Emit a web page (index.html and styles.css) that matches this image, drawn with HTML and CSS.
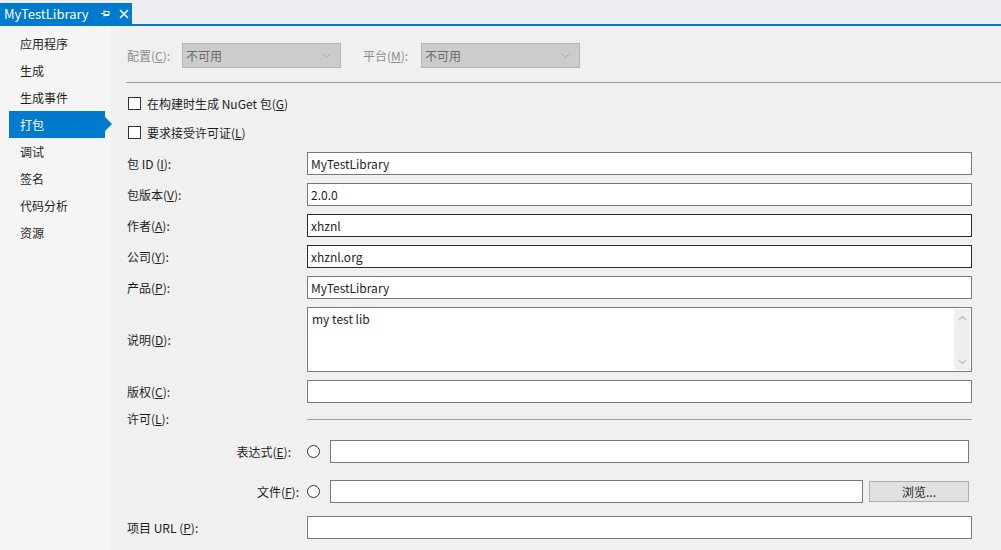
FILE: index.html
```html
<!DOCTYPE html>
<html lang="zh-CN">
<head>
<meta charset="utf-8">
<title>MyTestLibrary</title>
<link rel="stylesheet" href="styles.css">
</head>
<body>
<div class="header">
  <div class="tab">
    <span class="tab-title">MyTestLibrary</span>
    <svg class="pin" width="9" height="7" viewBox="0 0 9 7"><path d="M0 3.5H3M3 0.5V6.5M3 1.5H8V5.5H3M3 4.5H8" fill="none" stroke="#fff" stroke-width="1"/></svg>
    <svg class="close" width="10" height="10" viewBox="0 0 10 10"><path d="M1 1L9 9M9 1L1 9" stroke="#fff" stroke-width="1.6"/></svg>
  </div>
</div>
<div class="body">
  <nav class="sidebar">
    <div class="nav-item">应用程序</div>
    <div class="nav-item">生成</div>
    <div class="nav-item">生成事件</div>
    <div class="nav-item active">打包</div>
    <div class="nav-item">调试</div>
    <div class="nav-item">签名</div>
    <div class="nav-item">代码分析</div>
    <div class="nav-item">资源</div>
  </nav>
  <main class="main">
    <div class="config-row">
      <span class="dim-label">配置(<u>C</u>):</span>
      <div class="select"><span>不可用</span><svg width="9" height="5" viewBox="0 0 9 5"><path d="M0.5 0.5L4.5 4.5L8.5 0.5" fill="none" stroke="#a8a8a8"/></svg></div>
      <span class="dim-label plat">平台(<u>M</u>):</span>
      <div class="select"><span>不可用</span><svg width="9" height="5" viewBox="0 0 9 5"><path d="M0.5 0.5L4.5 4.5L8.5 0.5" fill="none" stroke="#a8a8a8"/></svg></div>
    </div>
    <div class="sep"></div>
    <label class="check-row"><span class="checkbox"></span>在构建时生成 NuGet 包(<u>G</u>)</label>
    <label class="check-row"><span class="checkbox"></span>要求接受许可证(<u>L</u>)</label>
    <div class="form">
      <div class="label">包 ID (<u>I</u>):</div>
      <div class="input">MyTestLibrary</div>
      <div class="label">包版本(<u>V</u>):</div>
      <div class="input">2.0.0</div>
      <div class="label">作者(<u>A</u>):</div>
      <div class="input dark">xhznl</div>
      <div class="label">公司(<u>Y</u>):</div>
      <div class="input dark">xhznl.org</div>
      <div class="label">产品(<u>P</u>):</div>
      <div class="input">MyTestLibrary</div>
      <div class="label">说明(<u>D</u>):</div>
      <div class="textarea">
        <div class="ta-text">my test lib</div>
        <div class="scroll">
          <svg width="9" height="6" viewBox="0 0 9 6"><path d="M1 5L4.5 1.5L8 5" fill="none" stroke="#c2c2c2" stroke-width="1.5"/></svg>
          <svg width="9" height="6" viewBox="0 0 9 6"><path d="M1 1L4.5 4.5L8 1" fill="none" stroke="#c2c2c2" stroke-width="1.5"/></svg>
        </div>
      </div>
      <div class="label">版权(<u>C</u>):</div>
      <div class="input"></div>
      <div class="label lic">许可(<u>L</u>):</div>
      <div class="lic-line"></div>
    </div>
    <div class="lic-row">
      <div class="sub-label">表达式(<u>E</u>):</div>
      <span class="radio"></span>
      <div class="input expr"></div>
    </div>
    <div class="lic-row file-row">
      <div class="sub-label wide">文件(<u>F</u>):</div>
      <span class="radio near"></span>
      <div class="input file"></div>
      <div class="button">浏览...</div>
    </div>
    <div class="form url">
      <div class="label">项目 URL (<u>P</u>):</div>
      <div class="input"></div>
    </div>
  </main>
</div>
</body>
</html>
```

FILE: styles.css
```css
* { box-sizing: border-box; }
html, body { margin: 0; padding: 0; }
body {
  width: 1001px;
  height: 550px;
  overflow: hidden;
  background: #eeeef2;
  font-family: "Noto Sans CJK SC", "Noto Sans", sans-serif;
  font-size: 12px;
  color: #1e1e1e;
}
u { text-decoration: underline; text-underline-offset: 1px; }

.header {
  height: 26px;
  padding-top: 3px;
  border-bottom: 2px solid #007acc;
}
.tab {
  width: 132px;
  height: 21px;
  background: #007acc;
  color: #fff;
  display: flex;
  align-items: center;
  padding-left: 4px;
  font-size: 13px;
}
.tab-title { line-height: 21px; }
.pin { margin-left: 12px; }
.close { margin-left: 9px; }

.body {
  display: flex;
  height: 524px;
}
.sidebar {
  width: 111px;
  background: #f5f5f5;
  padding-top: 4px;
}
.nav-item {
  height: 27px;
  line-height: 27px;
  padding-left: 20px;
  margin-left: 9px;
  margin-right: 6px;
  text-indent: -9px;
  position: relative;
}
.nav-item.active {
  background: #007acc;
  color: #fff;
}
.nav-item.active::after {
  content: "";
  position: absolute;
  right: -7px;
  top: 6px;
  border-left: 7px solid #007acc;
  border-top: 7px solid transparent;
  border-bottom: 7px solid transparent;
}

.main {
  flex: 1;
  background: #f0f0f0;
  padding-left: 15px;
  padding-top: 17px;
}
.config-row {
  display: flex;
  align-items: center;
  height: 25px;
  padding-left: 1px;
}
.dim-label { color: #8d8d8d; width: 55px; }
.dim-label.plat { margin-left: 22px; width: 58px; }
.select {
  width: 159px;
  height: 25px;
  background: #cccccc;
  border: 1px solid #b4b4b4;
  display: flex;
  align-items: center;
  justify-content: space-between;
  padding: 0 9px 0 3px;
  color: #6a6a6a;
}
.sep {
  height: 1px;
  background: #a0a0a0;
  margin-top: 14px;
}
.check-row {
  display: flex;
  align-items: center;
  height: 29px;
  padding-left: 2px;
}
.check-row:first-of-type { margin-top: 6px; }
.checkbox {
  width: 13px;
  height: 13px;
  border: 1px solid #333;
  background: #fff;
  margin-right: 6px;
}
.form {
  display: grid;
  grid-template-columns: 180px 665px;
  row-gap: 8px;
  align-items: center;
  padding-left: 1px;
  margin-top: 5px;
}
.label { line-height: 23px; }
.input {
  height: 23px;
  background: #fff;
  border: 1px solid #7a7a7a;
  padding-left: 3px;
  line-height: 21px;
}
.input.dark { border-color: #2b2b2b; }
.textarea {
  height: 65px;
  background: #fff;
  border: 1px solid #7a7a7a;
  display: flex;
  justify-content: space-between;
}
.ta-text { padding: 2px 0 0 4px; }
.scroll {
  width: 16px;
  margin: 1px;
  background: #efefef;
  display: flex;
  flex-direction: column;
  justify-content: space-between;
  align-items: center;
  padding: 6px 0 5px;
}
.label.lic { line-height: 16px; }
.lic-line { height: 1px; background: #a0a0a0; }

.lic-row {
  display: flex;
  align-items: center;
  margin-top: 13px;
  height: 23px;
  padding-left: 1px;
}
.sub-label {
  width: 164px;
  text-align: right;
}
.sub-label.wide { width: 172px; }
.radio {
  width: 13px;
  height: 13px;
  border-radius: 50%;
  border: 1px solid #333;
  background: #fff;
  margin-left: 16px;
  margin-right: 10px;
}
.radio.near { margin-left: 8px; }
.input.expr { width: 639px; }
.file-row { margin-top: 17px; }
.input.file { width: 533px; }
.button {
  width: 100px;
  height: 21px;
  margin-left: 6px;
  background: #e1e1e1;
  border: 1px solid #adadad;
  text-align: center;
  line-height: 19px;
}
.form.url { margin-top: 13px; }
```
